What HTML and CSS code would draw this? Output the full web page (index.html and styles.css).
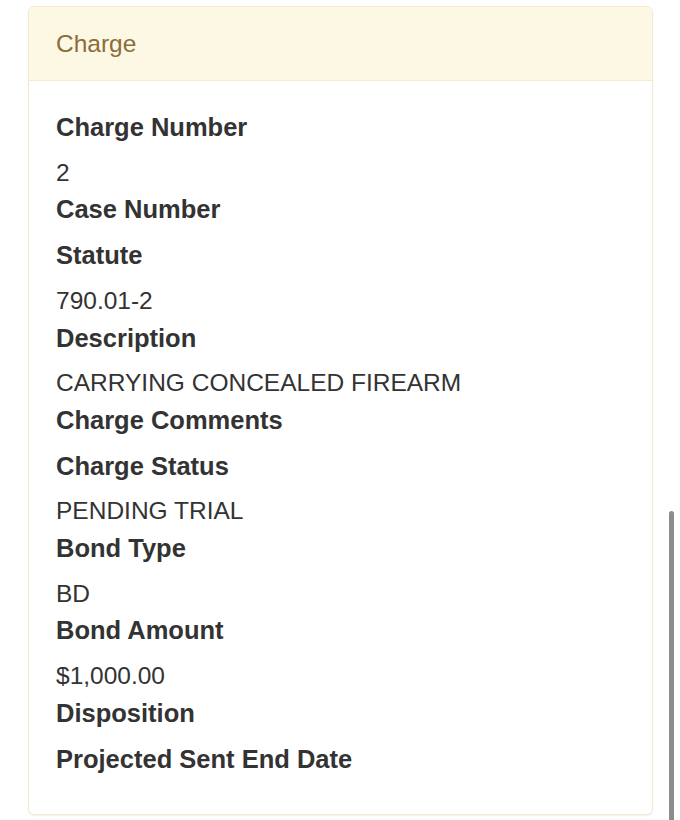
FILE: index.html
```html
<!DOCTYPE html>
<html>
<head>
<meta charset="utf-8">
<link rel="stylesheet" href="styles.css">
</head>
<body>
<div class="panel">
  <div class="panel-heading">Charge</div>
  <dl class="panel-body">
    <dt>Charge Number</dt>
    <dd>2</dd>
    <dt>Case Number</dt>
    <dt>Statute</dt>
    <dd>790.01-2</dd>
    <dt>Description</dt>
    <dd>CARRYING CONCEALED FIREARM</dd>
    <dt>Charge Comments</dt>
    <dt>Charge Status</dt>
    <dd>PENDING TRIAL</dd>
    <dt>Bond Type</dt>
    <dd>BD</dd>
    <dt>Bond Amount</dt>
    <dd>$1,000.00</dd>
    <dt>Disposition</dt>
    <dt>Projected Sent End Date</dt>
  </dl>
</div>
<div class="scrollbar"></div>
</body>
</html>
```
FILE: styles.css
```css
html, body {
  margin: 0;
  padding: 0;
  background: #fff;
  height: 820px;
  overflow: hidden;
}
body {
  font-family: "Liberation Sans", Arial, Helvetica, sans-serif;
  color: #333;
  padding: 6px 0 0 28px;
  box-sizing: border-box;
  position: relative;
}
.panel {
  width: 625px;
  box-sizing: border-box;
  border: 1px solid #f5ead0;
  border-radius: 6px;
  box-shadow: 0 1px 2px rgba(0,0,0,0.06);
  background: #fff;
  overflow: hidden;
}
.panel-heading {
  background: #fcf8e3;
  color: #8a6d3b;
  font-size: 24.5px;
  line-height: 28px;
  padding: 23px 27px 22px;
  border-bottom: 1px solid #f5ead0;
}
.panel-body {
  margin: 0;
  padding: 28px 27px 28px;
}
dt {
  font-weight: bold;
  font-size: 25.5px;
  line-height: 36.7px;
  margin: 0 0 9px;
}
dd {
  font-size: 24.5px;
  line-height: 36.7px;
  margin: 0;
}
.scrollbar {
  position: absolute;
  left: 669px;
  top: 511px;
  width: 5px;
  height: 320px;
  border-radius: 3px;
  background: #8c8c8c;
}
```
